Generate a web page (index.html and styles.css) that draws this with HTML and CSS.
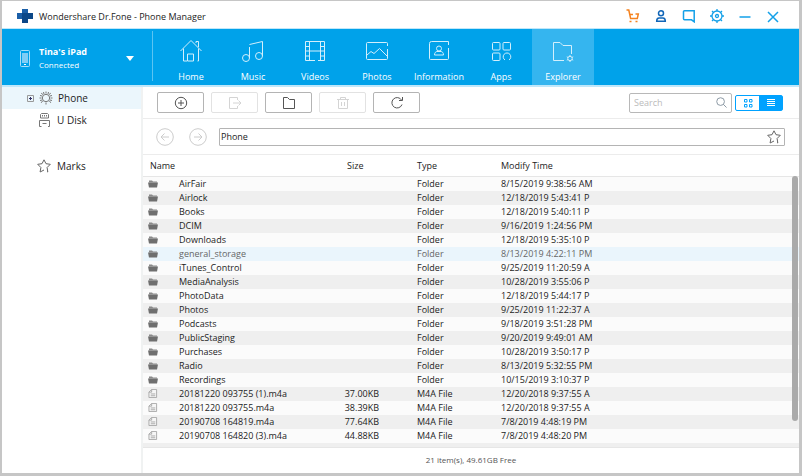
FILE: index.html
```html
<!DOCTYPE html>
<html lang="en">
<head>
    <meta charset="UTF-8">
    <meta name="viewport" content="width=device-width, initial-scale=1.0">
    <title>Wondershare Dr.Fone - Phone Manager</title>
    <link rel="stylesheet" href="styles.css">
</head>
<body>
    <!-- shared icons -->
    <svg class="sprite" aria-hidden="true">
        <symbol id="folder" viewBox="0 0 10 8">
            <path d="M1 2V1h3l1 1h4v1H1z" fill="#8a8a8a"/>
            <path d="M0 3h10l-1 5H1z" fill="#6f6f6f"/>
        </symbol>
        <symbol id="file" viewBox="0 0 10 10">
            <path d="M3.500.5h5.500v9h-8.500v-6z M3.500.5v3h-3" fill="#f6f6f6" stroke="#a5a5a5"/>
            <path d="M2.500 5.500h5M2.500 7.500h5" stroke="#a5a5a5"/>
        </symbol>
        <symbol id="star" viewBox="0 0 14 14">
            <path d="M10 12.500l.8.500-.7-4.500L13.300 5.300 9 4.700 7 .8 5 4.700.7 5.300l3.200 3.200-.8 4.500L7 11" fill="none" stroke="#666"/>
        </symbol>
    </svg>

    <div class="window">
        <header class="titlebar">
            <svg class="logo" viewBox="0 0 16 14"><path d="M5 0h6v4h5v6h-5v4H5v-4H0V4h5z" fill="#0b4788"/><path d="M5 0h6v4H5zM0 4h5v6H0z" fill="#1b5fa8"/></svg>
            <h1>Wondershare Dr.Fone - Phone Manager</h1>
            <div class="window-buttons">
                <button type="button" aria-label="Store"><svg viewBox="0 0 14 14" fill="none" stroke="#f5821f" stroke-width="1.500"><path d="M.5 1h2.300l1.800 8.500h6.700l1-4.500H9.500M4 5.500h3M3.500 12.500h2M9.500 12.500h2"/></svg></button>
                <button type="button" aria-label="Account"><svg viewBox="0 0 14 14" fill="none" stroke="#1166b8" stroke-width="1.500"><circle cx="7" cy="4.200" r="2.500"/><path d="M2.700 12.300c0-2 .8-3.300 2.300-3.300h4c1.500 0 2.300 1.300 2.300 3.300z"/></svg></button>
                <button type="button" aria-label="Feedback"><svg viewBox="0 0 14 14" fill="none" stroke="#13a0e8" stroke-width="1.500"><path d="M2.500 1.800h9.700v11l-2.700-2H2.500a1 1 0 0 1-1-1V2.800a1 1 0 0 1 1-1z"/></svg></button>
                <button type="button" aria-label="Settings"><svg viewBox="0 0 14 14" fill="none" stroke="#13a0e8" stroke-width="1.300"><circle cx="7" cy="7" r="5"/><circle cx="7" cy="7" r="1.500"/><path d="M7 0v2M7 12v2M0 7h2M12 7h2M2 2l1.500 1.500M10.500 10.500L12 12M2 12l1.500-1.500M10.500 3.500L12 2"/></svg></button>
                <button type="button" aria-label="Minimize"><svg viewBox="0 0 14 14" stroke="#13a0e8" stroke-width="1.500"><path d="M1.500 8h11"/></svg></button>
                <button type="button" aria-label="Close"><svg viewBox="0 0 14 14" stroke="#13a0e8" stroke-width="1.500"><path d="M2 3l10 10M12 3L2 13"/></svg></button>
            </div>
        </header>

        <nav class="navbar">
            <button type="button" class="device">
                <svg class="device-icon" viewBox="0 0 10 17"><rect x=".5" y=".5" width="9" height="16" rx="1" fill="none" stroke="#a9def8"/><path d="M2 3h6v10H2z" fill="#7fcdf5"/><path d="M4 14.500h2" stroke="#fff"/></svg>
                <span class="device-text">
                    <strong>Tina's iPad</strong>
                    <span>Connected</span>
                </span>
                <span class="caret"></span>
            </button>
            <div class="tabs">
                <a href="#"><svg viewBox="0 0 24 24"><path d="M4.500 9.500v12.500h4v-7h6v7H9M19.500 9.500v12.500h-1M1.500 12L12 1.500 22.500 12M17 4V2.500h2.500V8"/></svg>Home</a>
                <a href="#"><svg viewBox="0 0 24 24"><circle cx="5" cy="19" r="3.500"/><circle cx="18" cy="17" r="3.500"/><path d="M8.500 19V8M8.500 5.500l13-3V17"/></svg>Music</a>
                <a href="#"><svg viewBox="0 0 24 24"><path d="M12 21.500H2.500v-19h19v19H15M6.500 2.500v19M17.500 2.500v19M6.500 12h11M2.500 7.500h4M2.500 12h4M2.500 17h4M17.500 7.500h4M17.500 12h4M17.500 17h4"/></svg>Videos</a>
                <a href="#"><svg viewBox="0 0 24 24"><path d="M22.500 7V4.500a1 1 0 0 0-1-1h-19a1 1 0 0 0-1 1v15a1 1 0 0 0 1 1h19a1 1 0 0 0 1-1V10M2 16l4-3.500 3 2 5.500-5L22 17"/></svg>Photos</a>
                <a href="#"><svg viewBox="0 0 24 24"><path d="M21.500 6V2.500h-17a2 2 0 0 0-2 2v15a1 1 0 0 0 1 1h17a1 1 0 0 0 1-1V9"/><circle cx="12" cy="9.500" r="2.500"/><path d="M7.500 16c0-2.500 1.500-3.500 2.500-3.500h4c1 0 2.500 1 2.500 3.500z"/></svg>Information</a>
                <a href="#"><svg viewBox="0 0 24 24"><rect x="3.500" y="3.500" width="7.500" height="7.500" rx="1"/><rect x="14" y="3.500" width="7.500" height="7.500" rx="1"/><rect x="3.500" y="14" width="7.500" height="7.500" rx="1"/><path d="M16 21a3.800 3.800 0 1 1 4 0"/></svg>Apps</a>
                <a href="#" class="active"><svg viewBox="0 0 24 24"><path d="M13 21.500H2.500v-18H9l3 3h8.500V15"/><circle cx="19" cy="19.500" r="2.200"/><path d="M19 16v1.300M19 21.700V23M15.800 17.800l1.200.7M21 20.500l1.200.7M15.800 21.200l1.200-.7M21 18.500l1.200-.7"/></svg>Explorer</a>
            </div>
        </nav>

        <div class="content">
            <aside class="sidebar">
                <a href="#" class="selected">
                    <svg class="expander" viewBox="0 0 7 7" fill="none" stroke="#999"><path d="M.5.5h6v6h-6z"/><path d="M2 3.500h3M3.500 2v3" stroke="#336"/></svg>
                    <svg class="place-icon" viewBox="0 0 14 14"><circle cx="7" cy="7" r="3.700"/><path d="M7 .5v2M7 11.500v2M.5 7h2M11.500 7h2M2.200 2.200l2 1.500M11.800 2.200l-2 1.500M2.200 11.800l1.500-2M11.800 11.800l-1.500-2M4.500 1l.5 2M9.500 1L9 3M1 4.500l2 .5M13 4.500l-2 .5M1 9.500L3 9M13 9.500L11 9" stroke="#777"/></svg>
                    Phone
                </a>
                <a href="#">
                    <svg class="place-icon" viewBox="0 0 14 14"><path d="M3.500 5V1.500l1-1h6l1 1V5zM5.500 2v1.500M7.500 2v1.500M9.500 2v1.500M4.500 13.500h-2V7.500h10v6H11M5.500 10.500h4"/></svg>
                    U Disk
                </a>
                <a href="#" class="marks">
                    <svg class="place-icon"><use href="#star"/></svg>
                    Marks
                </a>
            </aside>

            <main class="explorer">
                <div class="toolbar">
                    <button type="button" aria-label="Add"><svg viewBox="0 0 14 14"><circle cx="7" cy="7" r="5.700"/><path d="M4 7h6M7 4v6"/></svg></button>
                    <button type="button" aria-label="Export" disabled><svg viewBox="0 0 14 14"><path d="M9.500 4V1.500h-8v11h8V10M5 7h8M10.500 4.500L13 7l-2.500 2.500"/></svg></button>
                    <button type="button" aria-label="New folder"><svg viewBox="0 0 14 14"><path d="M1.500 1.500h4l2 2h5v9h-11z"/></svg></button>
                    <button type="button" aria-label="Delete" disabled><svg viewBox="0 0 14 14"><path d="M1 3.500h12M4.500 3V1.500h5V3M2.500 4v8.500h9V4M5.500 6v4M8.500 6v4"/></svg></button>
                    <button type="button" aria-label="Refresh"><svg viewBox="0 0 14 14"><path d="M11.500 4A5.200 5.200 0 1 0 12 8.500M12.500 1v3.500H9"/></svg></button>
                    <label class="search">
                        <input type="text" placeholder="Search" aria-label="Search">
                        <svg viewBox="0 0 12 12"><circle cx="5" cy="5" r="4.200"/><path d="M8 8l3.500 3.500"/></svg>
                    </label>
                    <div class="view-switch">
                        <button type="button" aria-label="Grid view"><svg viewBox="0 0 10 10"><path d="M1.500 1.500h2.500v2.500h-2.500zM6.500 1.500h2.500v2.500h-2.500zM1.500 6.500h2.500v2.500h-2.500zM6.500 6.500h2.500v2.500h-2.500z"/></svg></button>
                        <button type="button" aria-label="List view" class="on"><svg viewBox="0 0 10 10"><path d="M1 1.500h8M1 3.500h8M1 5.500h8M1 7.500h8"/></svg></button>
                    </div>
                </div>

                <div class="pathbar">
                    <button type="button" aria-label="Back" disabled><svg viewBox="0 0 18 18"><circle cx="9" cy="9" r="8.300"/><path d="M5 9h8M8.500 5.500L5 9l3.500 3.500"/></svg></button>
                    <button type="button" aria-label="Forward" disabled><svg viewBox="0 0 18 18"><circle cx="9" cy="9" r="8.300"/><path d="M5 9h8M9.500 5.500L13 9l-3.500 3.500"/></svg></button>
                    <div class="path">
                        <input type="text" value="Phone" aria-label="Path">
                        <button type="button" aria-label="Add to marks"><svg><use href="#star"/></svg></button>
                    </div>
                </div>

                <div class="files">
                    <table>
                        <thead>
                            <tr><th class="icon">Name</th><th class="name"></th><th class="size">Size</th><th class="type">Type</th><th>Modify Time</th></tr>
                        </thead>
                        <tbody>
                            <tr><td><svg><use href="#folder"/></svg></td><td>AirFair</td><td></td><td>Folder</td><td>8/15/2019 9:38:56 AM</td></tr>
                            <tr><td><svg><use href="#folder"/></svg></td><td>Airlock</td><td></td><td>Folder</td><td>12/18/2019 5:43:41 P</td></tr>
                            <tr><td><svg><use href="#folder"/></svg></td><td>Books</td><td></td><td>Folder</td><td>12/18/2019 5:40:11 P</td></tr>
                            <tr><td><svg><use href="#folder"/></svg></td><td>DCIM</td><td></td><td>Folder</td><td>9/16/2019 1:24:56 PM</td></tr>
                            <tr><td><svg><use href="#folder"/></svg></td><td>Downloads</td><td></td><td>Folder</td><td>12/18/2019 5:35:10 P</td></tr>
                            <tr class="hover"><td><svg><use href="#folder"/></svg></td><td>general_storage</td><td></td><td>Folder</td><td>8/13/2019 4:22:11 PM</td></tr>
                            <tr><td><svg><use href="#folder"/></svg></td><td>iTunes_Control</td><td></td><td>Folder</td><td>9/25/2019 11:20:59 A</td></tr>
                            <tr><td><svg><use href="#folder"/></svg></td><td>MediaAnalysis</td><td></td><td>Folder</td><td>10/28/2019 3:55:06 P</td></tr>
                            <tr><td><svg><use href="#folder"/></svg></td><td>PhotoData</td><td></td><td>Folder</td><td>12/18/2019 5:44:17 P</td></tr>
                            <tr><td><svg><use href="#folder"/></svg></td><td>Photos</td><td></td><td>Folder</td><td>9/25/2019 11:22:37 A</td></tr>
                            <tr><td><svg><use href="#folder"/></svg></td><td>Podcasts</td><td></td><td>Folder</td><td>9/18/2019 3:51:28 PM</td></tr>
                            <tr><td><svg><use href="#folder"/></svg></td><td>PublicStaging</td><td></td><td>Folder</td><td>9/20/2019 9:49:01 AM</td></tr>
                            <tr><td><svg><use href="#folder"/></svg></td><td>Purchases</td><td></td><td>Folder</td><td>10/28/2019 3:50:17 P</td></tr>
                            <tr><td><svg><use href="#folder"/></svg></td><td>Radio</td><td></td><td>Folder</td><td>8/13/2019 5:32:55 PM</td></tr>
                            <tr><td><svg><use href="#folder"/></svg></td><td>Recordings</td><td></td><td>Folder</td><td>10/15/2019 3:10:37 P</td></tr>
                            <tr><td><svg><use href="#file"/></svg></td><td>20181220 093755 (1).m4a</td><td>37.00KB</td><td>M4A File</td><td>12/20/2018 9:37:55 A</td></tr>
                            <tr><td><svg><use href="#file"/></svg></td><td>20181220 093755.m4a</td><td>38.39KB</td><td>M4A File</td><td>12/20/2018 9:37:55 A</td></tr>
                            <tr><td><svg><use href="#file"/></svg></td><td>20190708 164819.m4a</td><td>77.64KB</td><td>M4A File</td><td>7/8/2019 4:48:19 PM</td></tr>
                            <tr><td><svg><use href="#file"/></svg></td><td>20190708 164820 (3).m4a</td><td>44.88KB</td><td>M4A File</td><td>7/8/2019 4:48:20 PM</td></tr>
                            <tr><td></td><td></td><td></td><td></td><td></td></tr>
                        </tbody>
                    </table>
                    <div class="scrollbar"></div>
                </div>

                <footer class="status">21 item(s), 49.61GB Free</footer>
            </main>
        </div>
    </div>
</body>
</html>
```
FILE: styles.css
```css
* {
    box-sizing: border-box;
}
body {
    margin: 0;
    font-family: "Open Sans", "Noto Sans", sans-serif;
    font-size: 9px;
    color: #1c1c1c;
}
button, input {
    font: inherit;
    color: inherit;
    margin: 0;
    padding: 0;
    border: 0;
    background: none;
}
a {
    color: inherit;
    text-decoration: none;
}
svg {
    display: block;
    flex: none;
}
.sprite {
    position: absolute;
    width: 0;
    height: 0;
}
.window {
    display: flex;
    flex-direction: column;
    height: 100vh;
    border: solid #c6c6c6;
    border-width: 1px 3px 3px 2px;
    background: #fff;
}

/* title bar */
.titlebar {
    display: flex;
    align-items: center;
    flex: none;
    height: 27px;
    padding: 3px 19px 0 15px;
}
.logo {
    width: 16px;
    height: 14px;
}
.titlebar h1 {
    margin: 0 0 0 6px;
    font-size: 9px;
    font-weight: normal;
}
.window-buttons {
    display: flex;
    gap: 14px;
    margin-left: auto;
}
.window-buttons svg {
    width: 14px;
    height: 14px;
}

/* blue navigation */
.navbar {
    display: flex;
    flex: none;
    height: 59px;
    border: solid #bfe7fa;
    border-width: 1px 0 2px;
    background: #00a2ea;
    color: #fff;
}
.device {
    display: flex;
    align-items: center;
    width: 151px;
    height: 50px;
    margin-top: 2px;
    padding: 4px 18px 0;
    border-right: 1px solid #5cc4f2;
    text-align: left;
}
.device-icon {
    width: 10px;
    height: 17px;
}
.device-text {
    display: flex;
    flex-direction: column;
    margin-left: 9px;
    line-height: 13px;
}
.device-text span {
    font-size: 8px;
}
.caret {
    margin-left: auto;
    border: 4px solid transparent;
    border-top: 5px solid #fff;
    border-bottom: 0;
}
.tabs {
    display: flex;
    padding-left: 7px;
}
.tabs a {
    display: flex;
    flex-direction: column;
    align-items: center;
    gap: 7px;
    width: 62px;
    padding-top: 10px;
    line-height: 13px;
}
.tabs a.active {
    background: #35b5ef;
}
.tabs svg {
    width: 24px;
    height: 24px;
    fill: none;
    stroke: #d3effc;
}

.content {
    display: flex;
    flex: 1;
    min-height: 0;
}

/* sidebar */
.sidebar {
    flex: none;
    width: 141px;
    border-right: 2px solid #f0f2f2;
    font-size: 10px;
}
.sidebar a {
    display: flex;
    align-items: center;
    gap: 6px;
    height: 22px;
    padding-left: 35px;
}
.sidebar a.selected {
    gap: 5px;
    padding-left: 25px;
    background: #ebf6fc;
}
.sidebar a.marks {
    margin-top: 24px;
}
.expander {
    width: 7px;
    height: 7px;
}
.place-icon {
    width: 14px;
    height: 14px;
    fill: none;
    stroke: #777;
}

/* explorer */
.explorer {
    display: flex;
    flex-direction: column;
    flex: 1;
    min-width: 0;
}
.toolbar {
    display: flex;
    align-items: center;
    flex: none;
    gap: 7px;
    height: 32px;
    padding: 0 16px 0 14px;
    border-bottom: 1px solid #ececec;
}
.toolbar > button {
    display: flex;
    align-items: center;
    justify-content: center;
    width: 47px;
    height: 21px;
    border: 1px solid #b4b4b4;
    border-radius: 2px;
}
.toolbar > button:disabled {
    border-color: #e2e2e2;
}
.toolbar > button svg {
    width: 14px;
    height: 14px;
    fill: none;
    stroke: #555;
}
.toolbar > button:disabled svg {
    stroke: #d4d4d4;
}
.search {
    display: flex;
    align-items: center;
    width: 103px;
    height: 20px;
    margin-left: auto;
    padding: 0 4px;
    border: 1px solid #b8b8b8;
    border-radius: 2px;
}
.search input {
    flex: 1;
    min-width: 0;
    outline: 0;
}
.search input::placeholder {
    color: #bbb;
}
.search svg {
    width: 11px;
    height: 11px;
    fill: none;
    stroke: #82909c;
}
.view-switch {
    display: flex;
    width: 48px;
    height: 16px;
    margin-left: -4px;
    border: 1px solid #00a2ff;
    border-radius: 2px;
}
.view-switch button {
    display: flex;
    flex: 1;
    align-items: center;
    justify-content: center;
}
.view-switch .on {
    background: #00a2ff;
}
.view-switch svg {
    width: 10px;
    height: 10px;
    fill: none;
    stroke: #00a2ff;
}
.view-switch .on svg {
    stroke: #fff;
}
.pathbar {
    display: flex;
    align-items: center;
    flex: none;
    gap: 12px;
    height: 36px;
    padding: 0 14px 0 13px;
    border-bottom: 1px solid #ececec;
}
.pathbar > button {
    margin-right: 3px;
}
.pathbar > button + button {
    margin-right: 0;
}
.pathbar > button svg {
    width: 18px;
    height: 18px;
    fill: none;
    stroke: #ccc;
}
.path {
    display: flex;
    align-items: center;
    flex: 1;
    height: 18px;
    padding: 0 3px 0 1px;
    border: 1px solid #b4b4b4;
    border-radius: 1px;
}
.path input {
    flex: 1;
    min-width: 0;
    outline: 0;
}
.path svg {
    width: 14px;
    height: 14px;
}

/* file list */
.files {
    position: relative;
    flex: 1;
    min-height: 0;
    overflow: hidden;
}
table {
    width: 100%;
    border-collapse: collapse;
    table-layout: fixed;
}
th, td {
    padding: 0;
    text-align: left;
    font-weight: normal;
    white-space: nowrap;
}
th {
    height: 21px;
    border-bottom: 1px solid #e6e6e6;
}
td {
    height: 14px;
    line-height: 14px;
}
th.icon {
    width: 36px;
    padding-left: 7px;
}
th.name {
    width: 163px;
}
th.size {
    width: 75px;
    padding-left: 5px;
}
th.type {
    width: 84px;
}
td:first-child {
    padding-left: 5px;
}
td:nth-child(3) {
    padding-right: 38px;
    text-align: right;
}
td svg {
    width: 10px;
    height: 9px;
}
tbody tr {
    background: #fbfbfb;
}
tbody tr:nth-child(even) {
    background: #efefef;
}
tbody tr.hover {
    background: #eaf5fc;
    color: #666;
}
.scrollbar {
    position: absolute;
    top: 21px;
    right: 1px;
    width: 6px;
    height: 84%;
    border-radius: 3px;
    background: #aaa;
}
.status {
    display: flex;
    align-items: center;
    justify-content: center;
    flex: none;
    height: 26px;
    padding-bottom: 2px;
    border-top: 1px solid #e6e6e6;
    font-size: 8px;
    color: #555;
}
```
